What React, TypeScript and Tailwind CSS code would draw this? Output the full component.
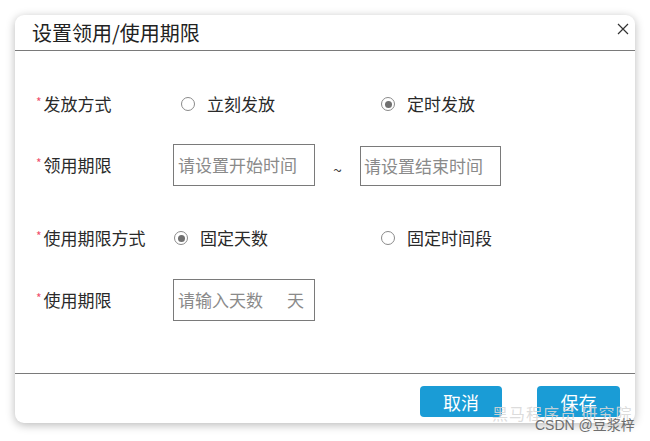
import React from 'react';

const font = "font-['Microsoft_YaHei','Noto_Sans_CJK_SC',sans-serif]";

const Radio = ({ checked }: { checked?: boolean }) => (
  <span className="w-[14px] h-[14px] rounded-full border border-[#8a8a8a] flex items-center justify-center shrink-0 bg-white">
    {checked && <span className="w-[7px] h-[7px] rounded-full bg-[#707070]" />}
  </span>
);

const Label = ({ text }: { text: string }) => (
  <div className="w-[137px] flex items-center text-[17px] text-[#2a2a2a]">
    <span className="text-[#f0506e] text-[12px] -mt-[4px] mr-[2px]">*</span>
    <span>{text}</span>
  </div>
);

const Option = ({ text, checked, className }: { text: string; checked?: boolean; className?: string }) => (
  <label className={`flex items-center gap-[12px] text-[17px] text-[#2a2a2a] ${className ?? ''}`}>
    <Radio checked={checked} />
    <span>{text}</span>
  </label>
);

const App = () => {
  return (
    <div className={`w-[650px] h-[441px] bg-white p-[15px] relative ${font}`}>
      <div className="w-[620px] h-[408px] bg-white rounded-[9px] shadow-[0_2px_10px_rgba(0,0,0,0.28)] flex flex-col overflow-hidden">
        {/* Header */}
        <div className="h-[36px] border-b border-[#7a7a7a] flex items-center justify-between pl-[17px] pr-[4px]">
          <h2 className="text-[20px] text-[#222] leading-none">设置领用/使用期限</h2>
          <button className="w-[14px] h-[14px] -mt-[7px] text-[#333]">
            <svg viewBox="0 0 12 12" className="w-[12px] h-[12px]" fill="none" stroke="currentColor" strokeWidth="1.2">
              <path d="M1 1 L11 11 M11 1 L1 11" />
            </svg>
          </button>
        </div>

        {/* Body */}
        <div className="h-[322px] pl-[21px] pt-[32px] flex flex-col">
          <div className="h-[42px] flex items-center">
            <Label text="发放方式" />
            <Option text="立刻发放" className="ml-[8px] w-[200px]" />
            <Option text="定时发放" checked />
          </div>

          <div className="h-[42px] flex items-center mt-[19px]">
            <Label text="领用期限" />
            <div className="w-[142px] h-[42px] border border-[#7a7a7a] flex items-center pl-[4px] text-[17px] text-[#8a8a8a]">
              请设置开始时间
            </div>
            <div className="w-[45px] flex justify-center text-[16px] text-[#444] mt-[8px]">~</div>
            <div className="w-[141px] h-[40px] self-end border border-[#7a7a7a] flex items-center pl-[3px] text-[17px] text-[#8a8a8a]">
              请设置结束时间
            </div>
          </div>

          <div className="h-[42px] flex items-center mt-[31px]">
            <Label text="使用期限方式" />
            <Option text="固定天数" checked className="ml-[1px] w-[207px]" />
            <Option text="固定时间段" />
          </div>

          <div className="h-[42px] flex items-center mt-[20px]">
            <Label text="使用期限" />
            <div className="w-[142px] h-[42px] border border-[#7a7a7a] flex items-center justify-between pl-[4px] pr-[10px] text-[17px] text-[#8a8a8a]">
              <span>请输入天数</span>
              <span>天</span>
            </div>
          </div>
        </div>

        {/* Footer */}
        <div className="flex-1 border-t border-[#7a7a7a] flex justify-end items-start pt-[12px] pr-[15px] gap-[35px]">
          <button className="w-[82px] h-[31px] rounded-[4px] bg-[#1a9cd6] text-white text-[18px] leading-none">取消</button>
          <button className="w-[83px] h-[31px] rounded-[4px] bg-[#1a9cd6] text-white text-[18px] leading-none">保存</button>
        </div>
      </div>

      {/* watermark */}
      <div className="absolute left-[492px] top-[405px] text-[16px] leading-none text-[#d8d8d8]/90 tracking-[1px] pointer-events-none whitespace-nowrap">
        黑马程序员 研究院
      </div>
      <div className="absolute left-[535px] top-[418px] text-[14px] leading-none text-[#6e6e6e] pointer-events-none whitespace-nowrap font-['Liberation_Sans','Noto_Sans_CJK_SC',sans-serif]">
        CSDN @豆浆梓
      </div>
    </div>
  );
};

export default App;
